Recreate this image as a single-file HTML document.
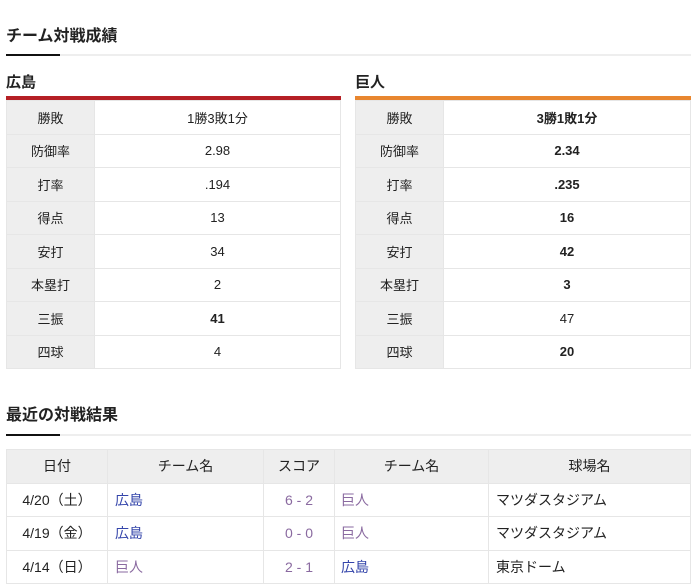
<!DOCTYPE html>
<html><head><meta charset="utf-8"><style>
body{margin:0;background:#fff;font-family:"Liberation Sans","Noto Sans CJK JP",sans-serif;color:#222;width:700px;height:586px;overflow:hidden;position:relative}
.h{position:absolute;left:6px;font-size:16px;font-weight:bold;color:#222}
.ul{position:absolute;left:6px;width:685px;height:2px;background:#eee}
.ul:before{content:"";position:absolute;left:0;top:0;width:54px;height:2px;background:#111}
.team{position:absolute;font-size:15px;font-weight:bold}
table{position:absolute;border-collapse:collapse;font-size:13px}
td{border:1px solid #e6e6e6;text-align:center;padding:0;height:32.5px}
td.l{background:#eee;width:87px}
.bar{position:absolute;height:4px}
.b{font-weight:bold}
.bl{color:#3344aa}.pu{color:#8a6aa0}
</style></head><body>
<div class="h" style="top:22px">チーム対戦成績</div>
<div class="ul" style="top:54px"></div>
<div class="team" style="left:6px;top:71px">広島</div>
<div class="team" style="left:355px;top:71px">巨人</div>
<div class="bar" style="left:6px;top:96px;width:335px;background:#b52025"></div>
<div class="bar" style="left:355px;top:96px;width:336px;background:#e8862f"></div>
<table style="left:6px;top:100px;width:335px">
<tr><td class="l">勝敗</td><td>1勝3敗1分</td></tr>
<tr><td class="l">防御率</td><td>2.98</td></tr>
<tr><td class="l">打率</td><td>.194</td></tr>
<tr><td class="l">得点</td><td>13</td></tr>
<tr><td class="l">安打</td><td>34</td></tr>
<tr><td class="l">本塁打</td><td>2</td></tr>
<tr><td class="l">三振</td><td class="b">41</td></tr>
<tr><td class="l">四球</td><td>4</td></tr>
</table>
<table style="left:355px;top:100px;width:336px">
<tr><td class="l">勝敗</td><td class="b">3勝1敗1分</td></tr>
<tr><td class="l">防御率</td><td class="b">2.34</td></tr>
<tr><td class="l">打率</td><td class="b">.235</td></tr>
<tr><td class="l">得点</td><td class="b">16</td></tr>
<tr><td class="l">安打</td><td class="b">42</td></tr>
<tr><td class="l">本塁打</td><td class="b">3</td></tr>
<tr><td class="l">三振</td><td>47</td></tr>
<tr><td class="l">四球</td><td class="b">20</td></tr>
</table>
<div class="h" style="top:401px">最近の対戦結果</div>
<div class="ul" style="top:434px"></div>
<table style="left:6px;top:449px;width:685px;font-size:14px">
<tr style="background:#eee"><td style="width:100px;height:32px">日付</td><td style="width:155px">チーム名</td><td style="width:70px">スコア</td><td style="width:153px">チーム名</td><td>球場名</td></tr>
<tr><td>4/20（土）</td><td class="bl" style="text-align:left;padding-left:7px">広島</td><td class="pu">6 - 2</td><td class="pu" style="text-align:left;padding-left:6px">巨人</td><td style="text-align:left;padding-left:7px">マツダスタジアム</td></tr>
<tr><td>4/19（金）</td><td class="bl" style="text-align:left;padding-left:7px">広島</td><td class="pu">0 - 0</td><td class="pu" style="text-align:left;padding-left:6px">巨人</td><td style="text-align:left;padding-left:7px">マツダスタジアム</td></tr>
<tr><td>4/14（日）</td><td class="pu" style="text-align:left;padding-left:7px">巨人</td><td class="pu">2 - 1</td><td class="bl" style="text-align:left;padding-left:6px">広島</td><td style="text-align:left;padding-left:7px">東京ドーム</td></tr>
</table>
</body></html>
